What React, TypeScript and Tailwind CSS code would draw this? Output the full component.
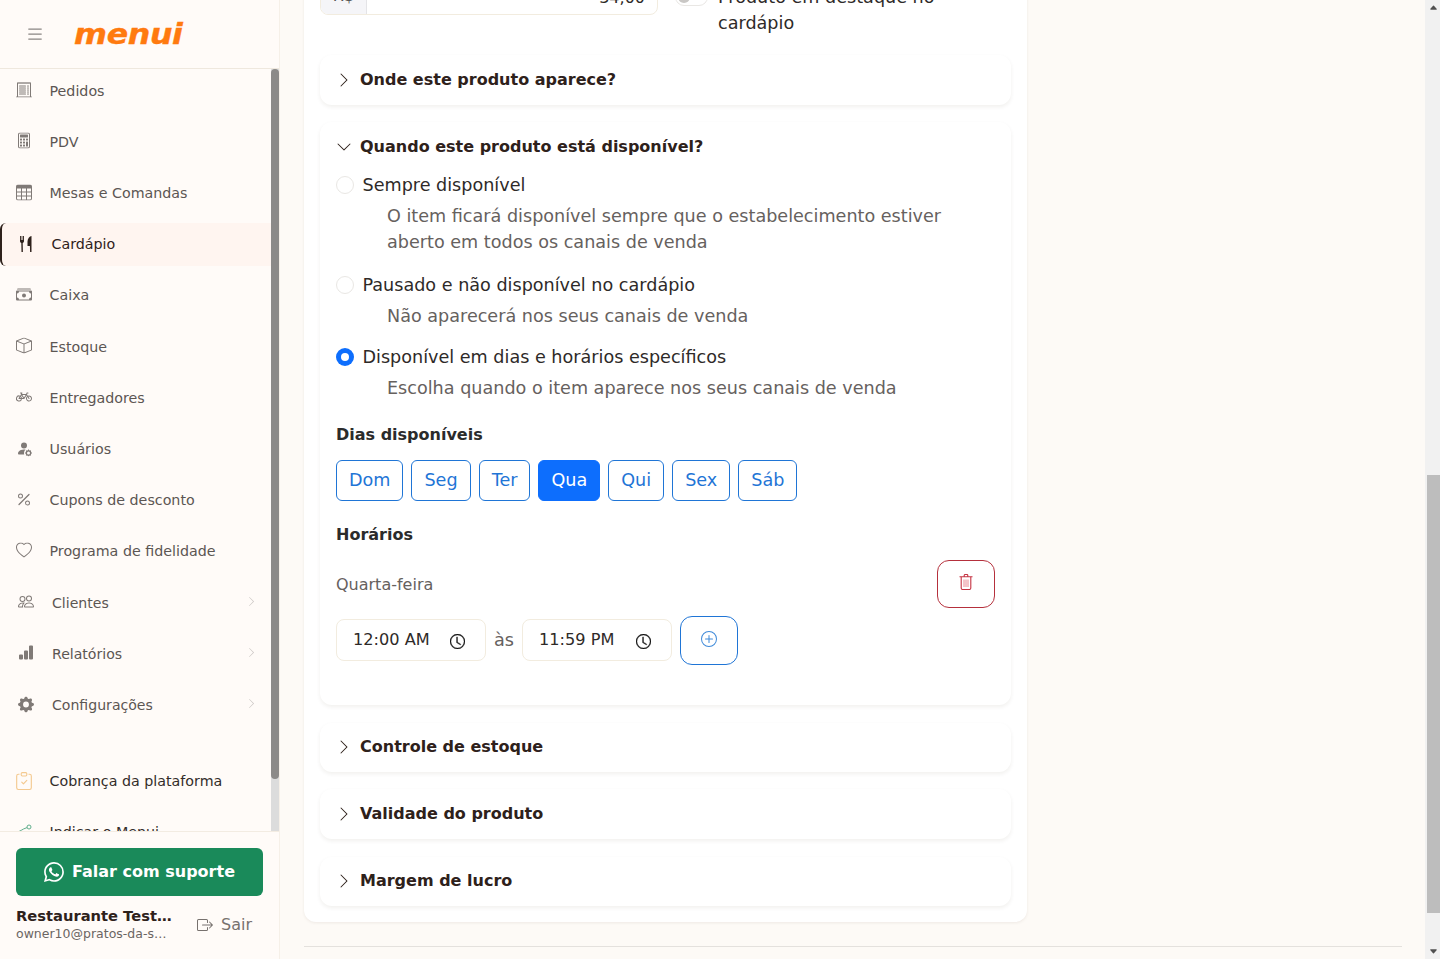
import React from "react";
import {
  BsList, BsReceiptCutoff, BsCalculator, BsTable, BsCashStack, BsBox, BsBicycle, BsPersonFillGear, BsPercent, BsHeart,
  BsPeople, BsBarChartFill, BsGearFill, BsClipboardCheck, BsChevronRight, BsChevronDown, BsWhatsapp, BsBoxArrowRight,
  BsPlusCircle, BsClock, BsCaretUpFill, BsCaretDownFill,
} from "react-icons/bs";

type Item = { label: string; Icon: React.ComponentType<{ className?: string }>; sub?: boolean };

const items: Item[] = [
  { label: "Pedidos", Icon: BsReceiptCutoff },
  { label: "PDV", Icon: BsCalculator },
  { label: "Mesas e Comandas", Icon: BsTable },
  { label: "Caixa", Icon: BsCashStack },
  { label: "Estoque", Icon: BsBox },
  { label: "Entregadores", Icon: BsBicycle },
  { label: "Usuários", Icon: BsPersonFillGear },
  { label: "Cupons de desconto", Icon: BsPercent },
  { label: "Programa de fidelidade", Icon: BsHeart },
  { label: "Clientes", Icon: BsPeople, sub: true },
  { label: "Relatórios", Icon: BsBarChartFill, sub: true },
  { label: "Configurações", Icon: BsGearFill, sub: true },
];

function Cutlery() {
  return (
    <svg viewBox="0 0 12 16" className="h-4 w-3 shrink-0 fill-[#2e211b]">
      <path d="M0 0h.9v4h.7V0h.8v4h.7V0h.9v5.2c0 .9-.6 1.5-1.3 1.7L2.9 16H1.5L1.3 6.9C.6 6.7 0 6.100 0 5.2z" />
      <path d="M11.500 0v16h-1.400l-.2-6H7.500V5.500C7.500 2.500 9.500.4 11.500 0z" />
    </svg>
  );
}

function Trash() {
  return (
    <svg viewBox="0 0 14 16" className="h-4 w-[14px] fill-none stroke-[#c53342]">
      <path d="M.5 2.800h13M5.200 2.600V1.400c0-.5.3-.9.9-.9h1.800c.6 0 .9.4.9.9v1.200" strokeWidth="1.100" />
      <path d="M2.200 3v11c0 .9.600 1.500 1.400 1.500h6.800c.8 0 1.400-.6 1.400-1.500V3" strokeWidth="1.100" />
      <path d="M5 5.500v7.500M7 5.500v7.500M9 5.500v7.500" strokeWidth="1" stroke="#e98a93" />
    </svg>
  );
}

function Referral() {
  return (
    <svg viewBox="0 0 16 16" className="ml-[16px] mr-[17.5px] h-4 w-4 -translate-y-[1px] fill-none stroke-[#5fae8c]" strokeWidth="1">
      <circle cx="13" cy="3" r="2" />
      <path d="M0.500 8C4 8 6 5 11 3.600" />
    </svg>
  );
}

function NavItem({ item }: { item: Item }) {
  const { Icon } = item;
  return (
    <div className="flex h-[43.2px] mb-2 items-center text-[#5c5653]">
      <span className={item.sub ? "ml-[18px] flex w-[34px] shrink-0" : "ml-[16px] flex w-[33.5px] shrink-0"}>
        <Icon className="h-4 w-4 -translate-y-[1.5px] text-[#807a77]" />
      </span>
      <span className={item.sub ? "flex-1 text-[14.08px]" : "flex-1 text-[14.25px]"}>{item.label}</span>
      {item.sub && <BsChevronRight className="mr-[14px] h-[11px] w-[11px] -translate-y-[2px] text-[#c9c5c2]" />}
    </div>
  );
}

function Sidebar() {
  return (
    <aside className="flex h-full w-[280px] shrink-0 flex-col border-r border-[#f6f0e8] bg-[#fffbf8]">
      <div className="flex h-[69px] shrink-0 items-center border-b border-[#efe8de] pl-[25px]">
        <BsList className="h-5 w-5 text-[#8a8683]" />
        <span className="ml-[29px] mt-[1px] origin-left scale-x-[1.13] text-[28px] font-bold italic leading-none tracking-[-0.3px] text-[#ff7a0f] [-webkit-text-stroke:0.4px_#ff7a0f]">
          menui
        </span>
      </div>
      <div className="flex min-h-0 flex-1">
        <nav className="min-w-0 flex-1 overflow-hidden pt-[0.7px]">
          {items.slice(0, 3).map((it) => (
            <NavItem key={it.label} item={it} />
          ))}
          <div className="flex h-[43.2px] mb-2 items-center rounded-l-[6px] border-l-2 border-[#2e211b] bg-[#fff5f0] pl-[18px] text-[#2e211b]">
            <span className="-translate-y-[1px]">
              <Cutlery />
            </span>
            <span className="ml-[19.5px] text-[14.25px]">Cardápio</span>
          </div>
          {items.slice(3).map((it) => (
            <NavItem key={it.label} item={it} />
          ))}
          <div className="flex h-[43.2px] mt-[33px] mb-2 items-center text-[#332d2a]">
            <BsClipboardCheck className="ml-[15px] mr-[16.5px] h-[18px] w-[18px] -translate-y-[1px] text-[#f4c98f]" />
            <span className="text-[14.25px]">Cobrança da plataforma</span>
          </div>
          <div className="flex h-[43.2px] items-center text-[#332d2a]">
            <Referral />
            <span className="text-[14.25px]">Indicar o Menui</span>
          </div>
        </nav>
        <div className="w-[8px] shrink-0 bg-[#dcdcdc]">
          <div className="h-[710px] rounded-[4px] bg-[#8c8a88]" />
        </div>
      </div>
      <div className="h-[128px] shrink-0 border-t border-[#f3ece2] px-4 pt-4">
        <div className="flex h-[48px] w-[247px] items-center justify-center gap-[8px] rounded-[6px] bg-[#1a8a5a] text-white">
          <BsWhatsapp className="h-5 w-5" />
          <span className="text-[16px] font-bold">Falar com suporte</span>
        </div>
        <div className="mt-[11px] flex items-center">
          <div className="w-[172px] min-w-0">
            <div className="whitespace-nowrap text-[14.7px] font-bold leading-[18px] text-[#2e211b]">Restaurante Test…</div>
            <div className="whitespace-nowrap text-[12.5px] leading-[18px] text-[#6b6562]">owner10@pratos-da-s…</div>
          </div>
          <BsBoxArrowRight className="ml-[9px] h-4 w-4 text-[#77716e]" />
          <span className="ml-[8px] text-[16px] text-[#77716e]">Sair</span>
        </div>
      </div>
    </aside>
  );
}

function Collapsed({ title }: { title: string }) {
  return (
    <div className="flex h-[49.5px] items-center rounded-[12px] bg-white pl-[16px] shadow-[0_2px_4px_rgba(60,40,20,0.07)]">
      <BsChevronRight className="mr-[8px] h-4 w-4 text-[#2e211b]" />
      <span className="text-[16px] font-bold text-[#2e211b]">{title}</span>
    </div>
  );
}

function Radio({ on }: { on?: boolean }) {
  return on ? (
    <span className="flex h-[18px] w-[18px] shrink-0 items-center justify-center rounded-full bg-[#0d6efd]">
      <span className="h-[8px] w-[8px] rounded-full bg-white" />
    </span>
  ) : (
    <span className="h-[18px] w-[18px] shrink-0 rounded-full border border-[#e9e7e4] bg-white" />
  );
}

function Option({ label, desc, on, mb }: { label: string; desc: string[]; on?: boolean; mb: string }) {
  return (
    <div className={mb}>
      <div className="flex h-[27px] items-center gap-[8.5px]">
        <Radio on={on} />
        <span className="pt-[2px] text-[17.6px] text-[#2e2a28]">{label}</span>
      </div>
      <div className="mt-[5px] pl-[51px] text-[17.6px] leading-[26px] text-[#66615e]">
        {desc.map((d) => (
          <div key={d}>{d}</div>
        ))}
      </div>
    </div>
  );
}

function Time({ value }: { value: string }) {
  return (
    <div className="mt-[3px] flex h-[42px] w-[150px] items-center rounded-[8px] border border-[#f2ecdf] bg-white pl-[16px] text-[#2e2a28]">
      <span className="w-[97px] text-[16.16px]">{value}</span>
      <BsClock className="mt-[2px] h-[15px] w-[15px] stroke-[#111] stroke-[0.4] text-[#111]" />
    </div>
  );
}

const days = ["Dom", "Seg", "Ter", "Qua", "Qui", "Sex", "Sáb"];

function Content() {
  return (
    <div className="min-w-0 flex-1 overflow-hidden bg-[#fdfaf6] pl-6 pr-[23px]">
      <div className="-mt-[40px] w-[723px] rounded-[12px] bg-white px-4 pb-4 shadow-[0_1px_3px_rgba(60,40,20,0.08)]">
        <div className="flex h-[95px] items-start">
          <div className="mt-[16px] flex h-[39px] w-[338px] overflow-hidden rounded-[8px] border border-[#f2ecdf]">
            <div className="flex w-[46px] items-center justify-center border-r border-[#e4e4e7] bg-[#f5f5f8] text-[16px] text-[#555]">R$</div>
            <div className="flex flex-1 items-center justify-end pr-[12px] pt-[4px] text-[16px] text-[#2e2a28]">34,00</div>
          </div>
          <div className="ml-[17px] mt-[28px] h-[18px] w-[33px] rounded-full border border-[#e9e7e4] bg-white">
            <div className="ml-[2px] mt-[2px] h-[12px] w-[12px] rounded-full bg-[#c9c7c5]" />
          </div>
          <div className="ml-[10px] mt-[24px] text-[17.6px] leading-[26px] text-[#2e2a28]">
            Produto em destaque no
            <br />
            cardápio
          </div>
        </div>

        <Collapsed title="Onde este produto aparece?" />

        <div className="mt-[17px] h-[583.5px] rounded-[12px] bg-white pl-[16px] pr-[16px] shadow-[0_2px_4px_rgba(60,40,20,0.07)]">
          <div className="flex h-[49.5px] items-center pt-[2px]">
            <BsChevronDown className="mr-[8px] h-4 w-4 text-[#2e211b]" />
            <span className="text-[16px] font-bold text-[#2e211b]">Quando este produto está disponível?</span>
          </div>
          <Option
            mb="mb-[16px]"
            label="Sempre disponível"
            desc={["O item ficará disponível sempre que o estabelecimento estiver", "aberto em todos os canais de venda"]}
          />
          <Option mb="mb-[14px]" label="Pausado e não disponível no cardápio" desc={["Não aparecerá nos seus canais de venda"]} />
          <Option
            mb="mb-[22px]"
            on
            label="Disponível em dias e horários específicos"
            desc={["Escolha quando o item aparece nos seus canais de venda"]}
          />
          <div className="text-[16px] font-bold leading-[24px] text-[#2b2b2b]">Dias disponíveis</div>
          <div className="mt-[13px] flex gap-2">
            {days.map((d) => (
              <div
                key={d}
                className={
                  d === "Qua"
                    ? "flex h-[41px] items-center rounded-[6px] border border-[#0d6efd] bg-[#0d6efd] px-[12px] text-[17.6px] text-white"
                    : "flex h-[41px] items-center rounded-[6px] border border-[#1f75d6] bg-white px-[12px] text-[17.6px] text-[#1f75d6]"
                }
              >
                {d}
              </div>
            ))}
          </div>
          <div className="mt-[22px] text-[16px] font-bold leading-[24px] text-[#2b2b2b]">Horários</div>
          <div className="mt-[13px] flex h-[48px] items-center justify-between">
            <span className="pt-[2px] text-[16px] text-[#66615e]">Quarta-feira</span>
            <div className="flex h-[48px] w-[58px] items-center justify-center rounded-[12px] border border-[#b5303c] bg-white">
              <span className="-mt-[4px]">
                <Trash />
              </span>
            </div>
          </div>
          <div className="mt-[8px] flex items-start">
            <Time value="12:00 AM" />
            <span className="mx-[8px] mt-[11px] text-[17.6px] text-[#66615e]">às</span>
            <Time value="11:59 PM" />
            <div className="ml-[8px] flex h-[49px] w-[58px] items-center justify-center rounded-[12px] border border-[#1f75d6] bg-white">
              <BsPlusCircle className="-mt-[3px] h-4 w-4 text-[#3f8ad9]" />
            </div>
          </div>
        </div>

        <div className="mt-[17.5px]">
          <Collapsed title="Controle de estoque" />
        </div>
        <div className="mt-[17px]">
          <Collapsed title="Validade do produto" />
        </div>
        <div className="mt-[18px]">
          <Collapsed title="Margem de lucro" />
        </div>
      </div>
      <div className="mt-[24px] h-px bg-[#e4e1dd]" />
    </div>
  );
}

function PageScrollbar() {
  return (
    <div className="flex h-full w-[15px] shrink-0 flex-col bg-[#f1f1f1] pl-[2px]">
      <div className="flex h-[15px] shrink-0 items-center justify-center">
        <BsCaretUpFill className="h-[9px] w-[9px] text-[#505050]" />
      </div>
      <div className="h-[460px] shrink-0" />
      <div className="h-[438px] shrink-0 bg-[#bdbdbd]" />
      <div className="flex-1" />
      <div className="flex h-[15px] shrink-0 items-center justify-center">
        <BsCaretDownFill className="h-[9px] w-[9px] text-[#505050]" />
      </div>
    </div>
  );
}

export default function App() {
  return (
    <div className="flex h-screen overflow-hidden font-['DejaVu_Sans',sans-serif]">
      <Sidebar />
      <Content />
      <PageScrollbar />
    </div>
  );
}
